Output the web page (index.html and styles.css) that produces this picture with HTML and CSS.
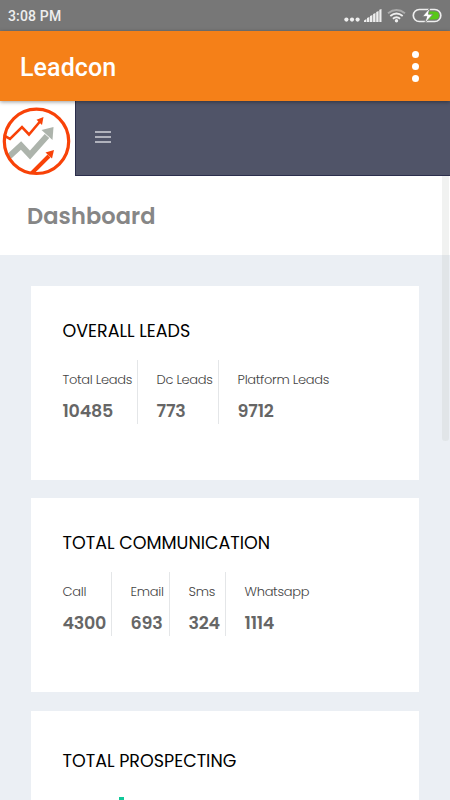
FILE: index.html
```html
<!doctype html>
<html lang="en">
  <head>
    <meta charset="utf-8">
    <meta name="viewport" content="width=device-width, initial-scale=1">
    <title>Leadcon</title>
    <link rel="stylesheet" href="styles.css">
  </head>
  <body>
    <div class="statusbar">
      <span class="time">3:08 PM</span>
      <svg class="status-icons" width="102" height="20" viewBox="0 0 102 20">
        <g fill="#eee">
          <circle cx="4.400" cy="11.600" r="2.100"/>
          <circle cx="10" cy="11.600" r="2.100"/>
          <circle cx="15.600" cy="11.600" r="2.100"/>
          <path d="M22 14v-1.500l2.400-1.500V14zM25 14v-4l2.400-1V14zM28 14V8l2.400-1V14zM31.100 14V6l2.400-1V14zM34.200 14V4l2.400-1V14zM37.300 14V1.800l2.200-.8V14z"/>
        </g>
        <g fill="none" stroke-width="1.900">
          <path stroke="#aaa" d="M46 5.300q8.500-6.500 17 0"/>
          <path stroke="#eee" d="M48.300 7.900q6.200-4.800 12.400 0M50.900 10.700q3.600-2.800 7.200 0"/>
        </g>
        <circle cx="54.500" cy="12.800" r="1.700" fill="#eee"/>
        <rect x="71.300" y="1.500" width="27.500" height="12" rx="6" fill="none" stroke="#eee" stroke-width="1.700"/>
        <path d="M87 3.500h6a4 4 0 0 1 0 8h-8z" fill="#58c818"/>
        <path d="M87.800 0l-7.300 8.400h4.300l-2 6.800 8.200-9h-4.600z" fill="#fff" stroke="#777" stroke-width=".8"/>
      </svg>
    </div>

    <div class="appbar">
      <div class="app-title">Leadcon</div>
      <div class="more"><i></i><i></i><i></i></div>
    </div>

    <div class="navbar">
      <div class="brand">
        <svg width="75" height="75" viewBox="0 0 75 75">
          <defs>
            <clipPath id="ring"><circle cx="36.500" cy="40.300" r="32"/></clipPath>
          </defs>
          <g clip-path="url(#ring)" fill="none">
            <path d="M3 34l7 4 12-12 7 7.500 11-13" stroke="#f84208" stroke-width="2.600"/>
            <path d="M8 56.500l13-12 9 9.500 17-19" stroke="#adb4ac" stroke-width="6"/>
            <path d="M31 73l18-18" stroke="#f84208" stroke-width="4"/>
          </g>
          <path d="M43.500 16l-1.500 8-5.500-5.300z" fill="#f84208"/>
          <path d="M53.500 26l-1 13-11-10z" fill="#adb4ac"/>
          <path d="M54 49l-2 8.500-6.500-6z" fill="#f84208"/>
          <circle cx="36.500" cy="40.300" r="32.200" fill="none" stroke="#f84208" stroke-width="3.200"/>
        </svg>
      </div>
      <div class="menu-toggle"><i></i><i></i><i></i></div>
    </div>

    <div class="page-head">
      <h1>Dashboard</h1>
    </div>

    <div class="content">
      <div class="card">
        <h2>OVERALL LEADS</h2>
        <div class="stats stats-leads">
          <div class="stat"><p>Total Leads</p><b>10485</b></div>
          <div class="stat"><p>Dc Leads</p><b>773</b></div>
          <div class="stat"><p>Platform Leads</p><b>9712</b></div>
        </div>
      </div>
      <div class="card">
        <h2>TOTAL COMMUNICATION</h2>
        <div class="stats stats-comm">
          <div class="stat"><p>Call</p><b>4300</b></div>
          <div class="stat"><p>Email</p><b>693</b></div>
          <div class="stat"><p>Sms</p><b>324</b></div>
          <div class="stat"><p>Whatsapp</p><b>1114</b></div>
        </div>
      </div>
      <div class="card card-chart">
        <h2>TOTAL PROSPECTING</h2>
        <div class="bar"></div>
      </div>
    </div>
    <div class="scroll-thumb"></div>
  </body>
</html>
```
FILE: styles.css
```css
* {
  box-sizing: border-box;
}
body {
  margin: 0;
  height: 800px;
  overflow: hidden;
  background: #ebeff4;
  font-family: Poppins, Inter, sans-serif;
}
h1, h2, p {
  margin: 0;
}
.statusbar {
  height: 31px;
  padding: 0 6px 0 8px;
  display: flex;
  justify-content: space-between;
  background: #777;
}
.time {
  font: 500 14px/33px Roboto, sans-serif;
  letter-spacing: .15px;
  color: #eee;
}
.status-icons {
  margin-top: 8px;
}
.appbar {
  position: relative;
  height: 70px;
  padding: 0 31px 0 20px;
  display: flex;
  align-items: center;
  justify-content: space-between;
  background: #f58018;
  box-shadow: 0 1px 4px rgba(0, 0, 0, .4);
}
.app-title {
  font: 500 25px/30px Roboto, sans-serif;
  letter-spacing: .1px;
  padding-top: 4px;
  color: #fff;
}
.more {
  display: flex;
  flex-direction: column;
  gap: 5px;
}
.more i {
  width: 7px;
  height: 7px;
  border-radius: 50%;
  background: #fff;
}
.navbar {
  height: 75px;
  display: flex;
  background: #505468;
}
.brand {
  width: 75px;
  background: #fff;
}
.brand svg {
  display: block;
}
.menu-toggle {
  flex: 1;
  padding: 30px 0 0 19px;
  border-left: 1px solid #2b2e4c;
  border-bottom: 1px solid #2b2e4c;
}
.menu-toggle i {
  display: block;
  width: 16px;
  height: 2px;
  margin-bottom: 3px;
  background: #b0b2bc;
}
.page-head {
  height: 79px;
  padding-left: 27px;
  background: #fff;
}
.page-head h1 {
  font-size: 22.500px;
  font-weight: 600;
  line-height: 80px;
  letter-spacing: .1px;
  color: #868686;
}
.content {
  height: 545px;
  overflow: hidden;
  padding: 31px 31px 0;
}
.card {
  height: 194px;
  margin-bottom: 18px;
  padding: 31px 31px 0 31.500px;
  background: #fff;
}
.card h2 {
  font-size: 17.500px;
  font-weight: 400;
  line-height: 28px;
  white-space: nowrap;
  color: #000;
}
.stats {
  display: grid;
  margin-top: 15px;
}
.stats-leads {
  grid-template-columns: 75.500px 81px 120px;
}
.stats-comm {
  grid-template-columns: 49.500px 58px 56px 100px;
}
.stat {
  height: 64px;
  padding-left: 18.600px;
  border-right: 1px solid #e4e6e8;
}
.stat:first-child {
  padding-left: 0;
}
.stat:last-child {
  border-right: 0;
}
.stat p {
  font-size: 13px;
  font-weight: 300;
  line-height: 20px;
  letter-spacing: -.3px;
  margin-top: 10px;
  white-space: nowrap;
  color: #444;
}
.stat b {
  display: block;
  font-size: 17.500px;
  font-weight: 600;
  line-height: 24px;
  letter-spacing: -.25px;
  margin-top: 9px;
  color: #666;
}
.card-chart {
  margin-top: 19px;
  padding-top: 36px;
}
.bar {
  width: 5px;
  height: 40px;
  margin: 22px 0 0 56.500px;
  background: #10c898;
}
.scroll-thumb {
  position: absolute;
  top: 176px;
  right: 1px;
  width: 7px;
  height: 265px;
  border-radius: 0 0 3px 3px;
  background: rgba(190, 195, 190, .22);
}
```
